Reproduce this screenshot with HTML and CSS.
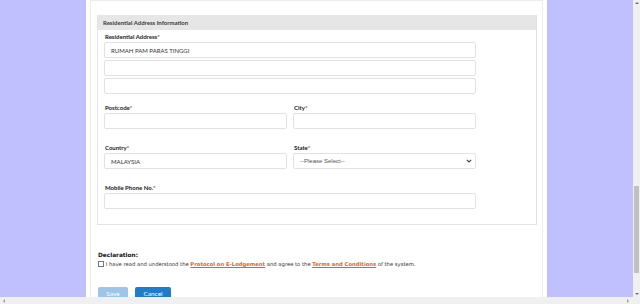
FILE: index.html
```html
<!DOCTYPE html>
<html lang="en">

<head>
    <meta charset="UTF-8">
    <title>Residential Address Information</title>
    <link rel="stylesheet" href="styles.css">
</head>

<body>
    <div class="window">
        <div class="viewport">
            <div class="page">
                <div class="page-inner">
                    <section class="panel">
                        <div class="panel-title">Residential Address Information</div>
                        <div class="panel-body">
                            <div class="field wide first">
                                <label>Residential Address<span class="req">*</span></label>
                                <input type="text" value="RUMAH PAM PARAS TINGGI">
                                <input type="text" class="extra">
                                <input type="text" class="extra">
                            </div>

                            <div class="row">
                                <div class="field">
                                    <label>Postcode<span class="req">*</span></label>
                                    <input type="text">
                                </div>
                                <div class="field">
                                    <label>City<span class="req">*</span></label>
                                    <input type="text">
                                </div>
                            </div>

                            <div class="row">
                                <div class="field">
                                    <label>Country<span class="req">*</span></label>
                                    <input type="text" value="MALAYSIA">
                                </div>
                                <div class="field">
                                    <label>State<span class="req">*</span></label>
                                    <div class="select">
                                        <span>--Please Select--</span>
                                        <svg width="6" height="4" viewBox="0 0 6 4">
                                            <path d="M0.8 0.8 L3 3 L5.2 0.8" fill="none" stroke="#444" stroke-width="1.1" />
                                        </svg>
                                    </div>
                                </div>
                            </div>

                            <div class="field wide">
                                <label>Mobile Phone No.<span class="req">*</span></label>
                                <input type="text">
                            </div>
                        </div>
                    </section>

                    <div class="declaration">
                        <div class="decl-title">Declaration:</div>
                        <div class="decl-line"><span class="checkbox"></span> I have read and understood the <a href="#">Protocol on E-Lodgement</a> and agree to the <a href="#">Terms and Conditions</a> of the system.</div>
                    </div>

                    <div class="buttons">
                        <button class="btn save">Save</button>
                        <button class="btn cancel">Cancel</button>
                    </div>
                </div>
            </div>
        </div>

        <div class="vscroll">
            <span class="arrow up"></span>
            <div class="track">
                <div class="thumb"></div>
            </div>
            <span class="arrow down"></span>
        </div>

        <div class="hscroll">
            <span class="harrow left"></span>
            <span class="harrow right"></span>
        </div>
        <div class="corner"></div>
    </div>
</body>

</html>
```

FILE: styles.css
```css
body {
    margin: 0;
    padding: 0;
    font-family: 'Lato', sans-serif;
    color: #333;
}

.window {
    display: grid;
    grid-template-columns: 633px 7px;
    grid-template-rows: 297px 7px;
    width: 640px;
    height: 304px;
    overflow: hidden;
}

.viewport {
    background-color: #c0c0ff;
    overflow: hidden;
}

.page {
    width: 461px;
    height: 100%;
    margin: 0 auto;
    background-color: #fff;
    padding: 0 4px 0 4px;
    box-sizing: border-box;
}

.page-inner {
    height: 100%;
    border-left: 1px solid #ececec;
    border-right: 1px solid #ececec;
    border-top: 1px solid #ececec;
    padding: 14px 5px 0 6px;
    box-sizing: border-box;
}

.panel {
    border: 1px solid #e4e4e4;
    border-top: none;
}

.panel-title {
    background-color: #e6e6e6;
    height: 15px;
    line-height: 15px;
    font-size: 6px;
    font-weight: bold;
    color: #3a3a3a;
    padding-left: 5px;
}

.panel-body {
    padding: 0 60px 15px 6px;
}

.row {
    display: grid;
    grid-template-columns: 1fr 1fr;
    gap: 6px;
}

.field {
    display: flex;
    flex-direction: column;
    gap: 2px;
    margin-top: 9px;
}

.field.first {
    margin-top: 2px;
}

.row + .row .field,
.row + .field {
    margin-top: 14px;
}

.field label {
    font-size: 6px;
    font-weight: bold;
    height: 8px;
    line-height: 9px;
    color: #222;
    padding-left: 1px;
}

.req {
    color: #c62828;
}

input,
.select {
    height: 16px;
    border: 1px solid #e2e2e2;
    border-radius: 2px;
    box-sizing: border-box;
    padding: 0 6px;
    font-family: 'Lato', sans-serif;
    font-size: 6px;
    color: #333;
    background: #fff;
    outline: none;
    margin: 0;
    width: 100%;
}

.select {
    display: flex;
    align-items: center;
    justify-content: space-between;
    font-family: 'Liberation Sans', sans-serif;
    color: #555;
    padding-right: 3px;
}

.declaration {
    margin-top: 26px;
    padding-left: 1px;
    font-family: 'DejaVu Sans', sans-serif;
    font-size: 5.25px;
    color: #333;
}

.decl-title {
    font-weight: bold;
    color: #111;
    font-size: 5.8px;
    line-height: 8px;
}

.decl-line {
    line-height: 10px;
    white-space: nowrap;
}

.decl-line a {
    color: #d9661f;
    font-weight: bold;
    text-decoration: underline;
}

.checkbox {
    display: inline-block;
    width: 4px;
    height: 4px;
    border: 1px solid #777;
    vertical-align: -1px;
}

.buttons {
    display: flex;
    gap: 7px;
    margin-top: 18px;
    padding-left: 1px;
}

.btn {
    height: 18px;
    border: none;
    border-radius: 2px;
    color: #fff;
    font-family: 'Lato', sans-serif;
    font-size: 6.5px;
    line-height: 8px;
    display: flex;
    justify-content: center;
    align-items: flex-start;
    box-sizing: border-box;
    padding: 3px 0 0 0;
}

.save {
    width: 30px;
    background-color: #9dc5ea;
}

.cancel {
    width: 36px;
    background-color: #1f7bcc;
}

.vscroll {
    background-color: #f0f0f0;
    display: flex;
    flex-direction: column;
    align-items: center;
}

.track {
    flex: 1;
    width: 100%;
    padding-top: 180px;
    box-sizing: border-box;
}

.thumb {
    width: 5px;
    height: 87px;
    margin-left: 1px;
    background-color: #c1c1c1;
}

.arrow {
    width: 0;
    height: 0;
    margin: 2px 0;
    border-left: 2px solid transparent;
    border-right: 2px solid transparent;
}

.arrow.up {
    border-bottom: 2px solid #707070;
}

.arrow.down {
    border-top: 2px solid #707070;
}

.hscroll {
    background-color: #f0f0f0;
    display: flex;
    justify-content: space-between;
    align-items: center;
    padding: 0 4px 0 3px;
}

.harrow {
    width: 0;
    height: 0;
    border-top: 2px solid transparent;
    border-bottom: 2px solid transparent;
}

.harrow.left {
    border-right: 2px solid #a0a0a0;
}

.harrow.right {
    border-left: 2px solid #a0a0a0;
}

.corner {
    background-color: #f0f0f0;
}
```
